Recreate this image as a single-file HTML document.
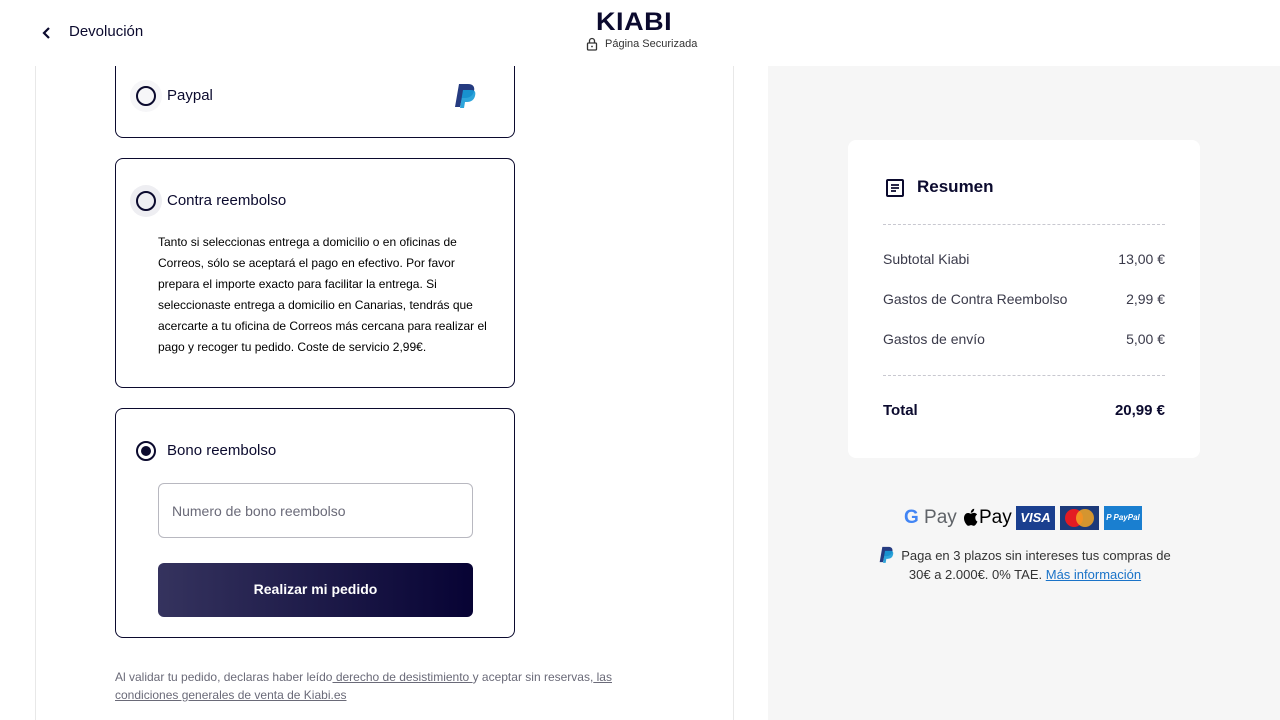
<!DOCTYPE html>
<html><head><meta charset="utf-8"><style>
*{box-sizing:border-box;margin:0;padding:0}
body{width:1280px;height:720px;overflow:hidden;background:#fff;font-family:"Liberation Sans",sans-serif;color:#0b0a2e;position:relative}
.hdr{position:absolute;top:0;left:0;width:1280px;height:66px;background:#fff;z-index:2}
.right{position:absolute;left:768px;top:66px;width:512px;height:654px;background:#f6f6f6}
.vl{position:absolute;top:66px;height:654px;width:1px;background:#e8e8e8}
.card{position:absolute;left:115px;width:400px;border:1px solid #0b0a2e;border-radius:8px;background:#fff}
.radio{position:absolute;width:20px;height:20px;border:2px solid #0b0a2e;border-radius:50%}
.halo{position:absolute;width:32px;height:32px;border-radius:50%;background:#eeeef2}
.lbl{position:absolute;font-size:15px}
.sum{position:absolute;left:848px;top:140px;width:352px;height:318px;background:#fff;border-radius:8px}
.row{position:absolute;left:35px;right:35px;font-size:14px;color:#3a3a4a;display:flex;justify-content:space-between}
.dash{position:absolute;left:35px;right:35px;border-top:1px dashed #c8c8d0}
</style></head><body>
<div class="hdr">
<svg style="position:absolute;left:40px;top:26px" width="12" height="14" viewBox="0 0 12 14"><path d="M9 2L4 7l5 5" stroke="#0b0a2e" stroke-width="2.2" fill="none"/></svg>
<div style="position:absolute;left:69px;top:23px;font-size:15px">Devolución</div>
<div style="position:absolute;left:596px;top:8px;font-size:25px;font-weight:bold;letter-spacing:0.5px;color:#0b0a2e;transform:scaleX(1.08);transform-origin:left">KIABI</div>
<svg style="position:absolute;left:586px;top:37px" width="12" height="14" viewBox="0 0 12 14"><rect x="1.5" y="6" width="9" height="7" rx="1" stroke="#333" stroke-width="1.3" fill="none"/><path d="M3.5 6V4a2.5 2.5 0 015 0v2" stroke="#333" stroke-width="1.3" fill="none"/><circle cx="6" cy="9.5" r="0.9" fill="#333"/></svg>
<div style="position:absolute;left:605px;top:38px;font-size:11px;color:#333">Página Securizada</div>
</div>
<div class="vl" style="left:35px"></div><div class="vl" style="left:733px"></div>
<div class="right"></div>

<div class="card" style="top:66px;height:72px;border-top:none;border-radius:0 0 8px 8px">
<div class="halo" style="left:14px;top:14px;background:#f6f6f8"></div>
<div class="radio" style="left:20px;top:20px"></div>
<div class="lbl" style="left:51px;top:21px">Paypal</div>
<svg style="position:absolute;left:338px;top:17px" width="24" height="28" viewBox="0 0 24 28"><path d="M5 1h9c5 0 7 3 6 7-1 5-5 7-9 7H8l-2 9H1z" fill="#253b80"/><path d="M9 7h8c4 0 5 2 4 6-1 4-4 6-8 6h-2l-1 6H6z" fill="#179bd7" opacity=".9"/></svg>
</div>

<div class="card" style="top:158px;height:230px">
<div class="halo" style="left:14px;top:26px"></div>
<div class="radio" style="left:20px;top:32px"></div>
<div class="lbl" style="left:51px;top:33px">Contra reembolso</div>
<div style="position:absolute;left:42px;top:73px;width:330px;font-size:12px;line-height:21px;color:#000">Tanto si seleccionas entrega a domicilio o en oficinas de Correos, sólo se aceptará el pago en efectivo. Por favor prepara el importe exacto para facilitar la entrega. Si seleccionaste entrega a domicilio en Canarias, tendrás que acercarte a tu oficina de Correos más cercana para realizar el pago y recoger tu pedido. Coste de servicio 2,99€.</div>
</div>

<div class="card" style="top:408px;height:230px">
<div class="radio" style="left:20px;top:32px"></div>
<div style="position:absolute;left:25px;top:37px;width:10px;height:10px;border-radius:50%;background:#0b0a2e"></div>
<div class="lbl" style="left:51px;top:33px">Bono reembolso</div>
<div style="position:absolute;left:42px;top:74px;width:315px;height:55px;border:1px solid #b8b8c0;border-radius:6px;font-size:14px;color:#6a6a78;padding:19px 13px">Numero de bono reembolso</div>
<div style="position:absolute;left:42px;top:154px;width:315px;height:54px;border-radius:6px;background:linear-gradient(90deg,#35335e,#070334);color:#fff;font-weight:bold;font-size:14px;text-align:center;line-height:52px">Realizar mi pedido</div>
</div>

<div style="position:absolute;left:115px;top:668px;width:520px;font-size:12px;line-height:18px;color:#6a6a78">Al validar tu pedido, declaras haber leído<u> derecho de desistimiento </u>y aceptar sin reservas,<u> las condiciones generales de venta de Kiabi.es</u></div>

<div class="sum">
<svg style="position:absolute;left:37px;top:38px" width="20" height="20" viewBox="0 0 20 20"><rect x="2" y="2" width="16" height="16" rx="1" stroke="#0b0a2e" stroke-width="2" fill="none"/><path d="M6 7h8M6 10h8M6 13h5" stroke="#0b0a2e" stroke-width="1.8"/></svg>
<div style="position:absolute;left:69px;top:37px;font-size:17px;font-weight:bold">Resumen</div>
<div class="dash" style="top:84px"></div>
<div class="row" style="top:111px"><span>Subtotal Kiabi</span><span>13,00 €</span></div>
<div class="row" style="top:151px"><span>Gastos de Contra Reembolso</span><span>2,99 €</span></div>
<div class="row" style="top:191px"><span>Gastos de envío</span><span>5,00 €</span></div>
<div class="dash" style="top:235px"></div>
<div class="row" style="top:262px;font-size:15px;font-weight:bold;color:#0b0a2e"><span>Total</span><span>20,99 €</span></div>
</div>

<div style="position:absolute;left:904px;top:507px;font-size:19px;color:#5f6368"><span style="color:#4285f4;font-weight:bold">G</span> Pay</div>
<svg style="position:absolute;left:963px;top:508px" width="15" height="18" viewBox="0 0 15 18"><path d="M12.3 9.6c0-2 1.7-3 1.8-3.1-1-1.4-2.5-1.6-3-1.6-1.3-.1-2.5.8-3.2.8-.7 0-1.7-.8-2.8-.7C3.7 5 2.4 5.8 1.700 7.100c-1.500 2.600-.4 6.400 1.100 8.500.7 1 1.500 2.200 2.600 2.200 1 0 1.400-.7 2.700-.7s1.600.7 2.700.7c1.100 0 1.800-1 2.500-2 .8-1.200 1.100-2.300 1.100-2.300s-2.100-.8-2.100-3.900zM10.300 3.500c.6-.7 1-1.700.9-2.700-.9 0-1.900.6-2.500 1.300-.5.600-1 1.600-.9 2.600 1 .1 1.900-.5 2.500-1.200z" fill="#000"/></svg>
<div style="position:absolute;left:979px;top:507px;font-size:19px;color:#000">Pay</div>
<div style="position:absolute;left:1016px;top:506px;width:39px;height:24px;background:#1a3f8f;color:#fff;font-weight:bold;font-style:italic;font-size:13px;text-align:center;line-height:24px">VISA</div>
<div style="position:absolute;left:1060px;top:506px;width:39px;height:24px;background:#1d3a7a"><div style="position:absolute;left:5px;top:3px;width:18px;height:18px;border-radius:50%;background:#e41b23"></div><div style="position:absolute;left:16px;top:3px;width:18px;height:18px;border-radius:50%;background:#f5a623;opacity:.85"></div></div>
<div style="position:absolute;left:1104px;top:506px;width:38px;height:24px;background:#1a7fd0;color:#fff;font-size:8px;font-style:italic;font-weight:bold;text-align:center;line-height:24px">P PayPal</div>

<svg style="position:absolute;left:879px;top:546px" width="16" height="19" viewBox="0 0 24 28"><path d="M5 1h9c5 0 7 3 6 7-1 5-5 7-9 7H8l-2 9H1z" fill="#253b80"/><path d="M9 7h8c4 0 5 2 4 6-1 4-4 6-8 6h-2l-1 6H6z" fill="#179bd7" opacity=".9"/></svg>
<div style="position:absolute;left:875px;top:546px;width:300px;font-size:13px;line-height:19px;color:#333;text-align:center;text-indent:22px">Paga en 3 plazos sin intereses tus compras de 30€ a 2.000€. 0% TAE. <u style="color:#1a73c8">Más información</u></div>
</body></html>
